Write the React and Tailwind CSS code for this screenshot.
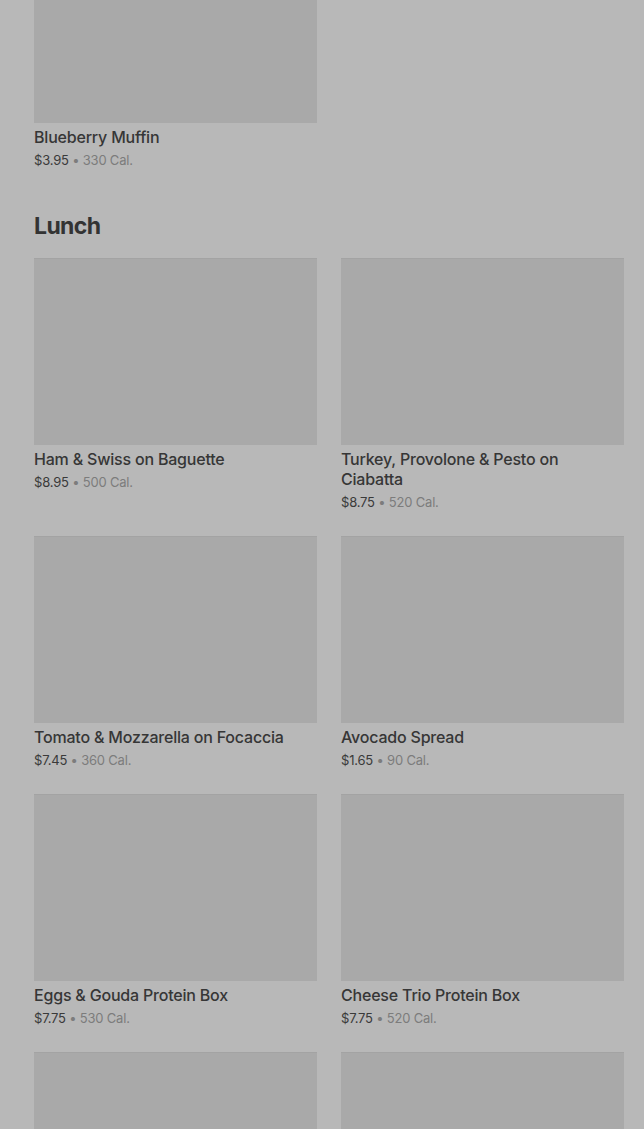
import React from 'react';

const lunch = [
  { name: 'Ham & Swiss on Baguette', price: '$8.95', cal: '500 Cal.' },
  { name: 'Turkey, Provolone & Pesto on Ciabatta', price: '$8.75', cal: '520 Cal.' },
  { name: 'Tomato & Mozzarella on Focaccia', price: '$7.45', cal: '360 Cal.' },
  { name: 'Avocado Spread', price: '$1.65', cal: '90 Cal.' },
  { name: 'Eggs & Gouda Protein Box', price: '$7.75', cal: '530 Cal.' },
  { name: 'Cheese Trio Protein Box', price: '$7.75', cal: '520 Cal.' },
  { name: '' },
  { name: '' },
];

function Card({ item }) {
  return (
    <div className="flex flex-col pb-6">
      <div className="h-[187px] bg-[#a9a9a9] border-t border-[#a3a3a3]" />
      {item.name && (
        <>
          <div className="mt-1 text-[16px] leading-5 font-medium tracking-[-0.2px] text-[#363636]">{item.name}</div>
          <div className="mt-[3px] text-[13px] leading-5 tracking-[-0.2px] text-[#3a3a3a]">
            {item.price} <span className="text-[#7c7c7c]">• {item.cal}</span>
          </div>
        </>
      )}
    </div>
  );
}

export default function App() {
  return (
    <div
      className="min-h-screen bg-[#b8b8b8] overflow-hidden"
      style={{ fontFamily: 'Inter, Roboto, "Noto Sans", sans-serif' }}
    >
      <div className="pl-[34px] pr-5">
        <div className="-mt-[64px] grid grid-cols-2 gap-x-6">
          <Card item={{ name: 'Blueberry Muffin', price: '$3.95', cal: '330 Cal.' }} />
        </div>
        <h2 className="mt-4 mb-4 text-[23px] leading-8 font-bold tracking-[-0.6px] text-[#333333]">Lunch</h2>
        <div className="grid grid-cols-2 gap-x-6">
          {lunch.map((item, i) => (
            <Card key={i} item={item} />
          ))}
        </div>
      </div>
    </div>
  );
}
